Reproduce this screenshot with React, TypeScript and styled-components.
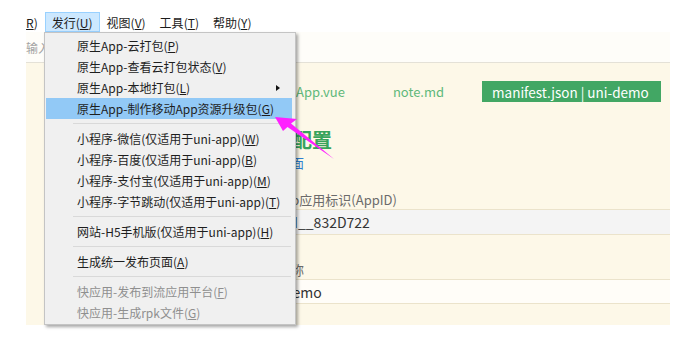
import React from "react";
import styled, { createGlobalStyle } from "styled-components";

const Global = createGlobalStyle`
  html, body { margin: 0; padding: 0; background: #ffffff; }
  body { font-family: "Noto Sans CJK SC", "Noto Sans", sans-serif; }
`;

const Stage = styled.div`
  position: relative;
  width: 689px;
  height: 358px;
  overflow: hidden;
  background: #ffffff;
`;

const Window = styled.div`
  position: relative;
  margin: 10px 0 0 26px;
  width: 644px;
`;

const MenuStrip = styled.div`
  height: 22px;
  overflow: hidden;
  background: #ffffff;
`;

const MenuBar = styled.div`
  display: flex;
  height: 22px;
  margin-left: -35px;
`;

const MenuTitle = styled.div<{ $active?: boolean }>`
  display: flex;
  align-items: center;
  margin-top: 2px;
  height: 18px;
  padding: 0 6px;
  font-size: 12px;
  color: #1b1b1b;
  border: 1px solid ${(p) => (p.$active ? "#99d1ff" : "transparent")};
  background: ${(p) => (p.$active ? "#cce8ff" : "transparent")};
  white-space: nowrap;
`;

const Toolbar = styled.div`
  display: flex;
  align-items: center;
  height: 30px;
  background: #fefdf9;
  border-bottom: 1px solid #e4e1d7;
  font-size: 12px;
  color: #a3a3a3;
`;

const Editor = styled.div`
  height: 262px;
  background: #fdf8e8;
  display: flex;
  flex-direction: column;
`;

const Tabs = styled.div`
  display: flex;
  gap: 28px;
  margin-top: 18px;
  padding-left: 260px;
  height: 21px;
`;

const Tab = styled.div<{ $active?: boolean }>`
  display: flex;
  align-items: center;
  box-sizing: border-box;
  padding: 0 10px;
  font-size: ${(p) => (p.$active ? "13.5px" : "13px")};
  color: ${(p) => (p.$active ? "#ffffff" : "#5fb87b")};
  background: ${(p) => (p.$active ? "#42a764" : "transparent")};
  ${(p) => (p.$active ? "width: 179px;" : "")}
  white-space: nowrap;
`;

const Form = styled.div`
  display: flex;
  flex-direction: column;
  padding-left: 226px;
`;

const Heading = styled.div`
  margin-top: 26px;
  font-size: 20px;
  line-height: 24px;
  font-weight: 700;
  color: #37a35c;
`;

const DocLink = styled.div`
  margin-top: 3px;
  font-size: 13px;
  line-height: 16px;
  color: #2f7fd1;
`;

const Label = styled.div<{ $gap: number }>`
  margin-top: ${(p) => p.$gap}px;
  font-size: 13px;
  line-height: 18px;
  color: #6b6b6b;
`;

const Field = styled.div<{ $tone: "gray" | "light"; $h: number }>`
  display: flex;
  align-items: center;
  height: ${(p) => p.$h}px;
  box-sizing: border-box;
  padding-left: 6px;
  background: ${(p) => (p.$tone === "gray" ? "#f4f4f4" : "#fffdf8")};
  border-top: 1px solid #ebe3cb;
  border-bottom: 1px solid #ebe3cb;
  font-size: 14px;
  color: #333333;
`;

const Dropdown = styled.div`
  position: absolute;
  left: 18px;
  top: 22px;
  width: 252px;
  box-sizing: border-box;
  padding: 2px 0 1px;
  background: #f0f0f0;
  border: 1px solid #c4c4c4;
  box-shadow: 2px 2px 3px rgba(0, 0, 0, 0.35);
`;

const Item = styled.div<{ $hover?: boolean; $disabled?: boolean }>`
  position: relative;
  display: flex;
  align-items: center;
  justify-content: space-between;
  height: 21px;
  margin: 0 3px 0 1px;
  padding: 0 12px 0 31px;
  font-size: 12px;
  white-space: nowrap;
  color: ${(p) => (p.$disabled ? "#8f8f8f" : "#1e1e1e")};
  background: ${(p) => (p.$hover ? "#92c9f6" : "transparent")};
`;

const SubArrow = styled.span`
  width: 0;
  height: 0;
  border-left: 4px solid #111111;
  border-top: 3.5px solid transparent;
  border-bottom: 3.5px solid transparent;
`;

const Separator = styled.div`
  height: 9px;
  display: flex;
  align-items: center;
  margin: 0 4px 0 28px;
  &::after {
    content: "";
    flex: 1;
    height: 1px;
    background: #d9d9d9;
  }
`;

const Pointer = styled.svg`
  position: absolute;
  left: 0;
  top: 0;
  pointer-events: none;
`;

type Entry =
  | { kind: "sep" }
  | { kind: "item"; label: string; key: string; hover?: boolean; sub?: boolean; disabled?: boolean };

const entries: Entry[] = [
  { kind: "item", label: "原生App-云打包", key: "P" },
  { kind: "item", label: "原生App-查看云打包状态", key: "V" },
  { kind: "item", label: "原生App-本地打包", key: "L", sub: true },
  { kind: "item", label: "原生App-制作移动App资源升级包", key: "G", hover: true },
  { kind: "sep" },
  { kind: "item", label: "小程序-微信(仅适用于uni-app)", key: "W" },
  { kind: "item", label: "小程序-百度(仅适用于uni-app)", key: "B" },
  { kind: "item", label: "小程序-支付宝(仅适用于uni-app)", key: "M" },
  { kind: "item", label: "小程序-字节跳动(仅适用于uni-app)", key: "T" },
  { kind: "sep" },
  { kind: "item", label: "网站-H5手机版(仅适用于uni-app)", key: "H" },
  { kind: "sep" },
  { kind: "item", label: "生成统一发布页面", key: "A" },
  { kind: "sep" },
  { kind: "item", label: "快应用-发布到流应用平台", key: "F", disabled: true },
  { kind: "item", label: "快应用-生成rpk文件", key: "G", disabled: true },
];

const titles = [
  { label: "运行", key: "R" },
  { label: "发行", key: "U", active: true },
  { label: "视图", key: "V" },
  { label: "工具", key: "T" },
  { label: "帮助", key: "Y" },
];

export default function App() {
  return (
    <Stage>
      <Global />
      <Window>
        <MenuStrip>
          <MenuBar>
            {titles.map((t) => (
              <MenuTitle key={t.key} $active={t.active}>
                {t.label}(<u>{t.key}</u>)
              </MenuTitle>
            ))}
          </MenuBar>
        </MenuStrip>
        <Toolbar>输入文件名</Toolbar>
        <Editor>
          <Tabs>
            <Tab>App.vue</Tab>
            <Tab>note.md</Tab>
            <Tab $active>manifest.json | uni-demo</Tab>
          </Tabs>
          <Form>
            <Heading>基础配置</Heading>
            <DocLink>说明页面</DocLink>
            <Label $gap={20}>uni-app应用标识(AppID)</Label>
            <Field $tone="gray" $h={26}>__UNI__832D722</Field>
            <Label $gap={26}>应用名称</Label>
            <Field $tone="light" $h={25}>uni-demo</Field>
          </Form>
        </Editor>
        <Dropdown>
          {entries.map((e, i) =>
            e.kind === "sep" ? (
              <Separator key={i} />
            ) : (
              <Item key={i} $hover={e.hover} $disabled={e.disabled}>
                <span>
                  {e.label}(<u>{e.key}</u>)
                </span>
                {e.sub && <SubArrow />}
              </Item>
            )
          )}
        </Dropdown>
      </Window>
      <Pointer width="689" height="358" viewBox="0 0 689 358">
        <polygon
          points="275,117 297,119 291,123.5 334,159 287.5,127 283,131"
          fill="#ff1fff"
        />
      </Pointer>
    </Stage>
  );
}
